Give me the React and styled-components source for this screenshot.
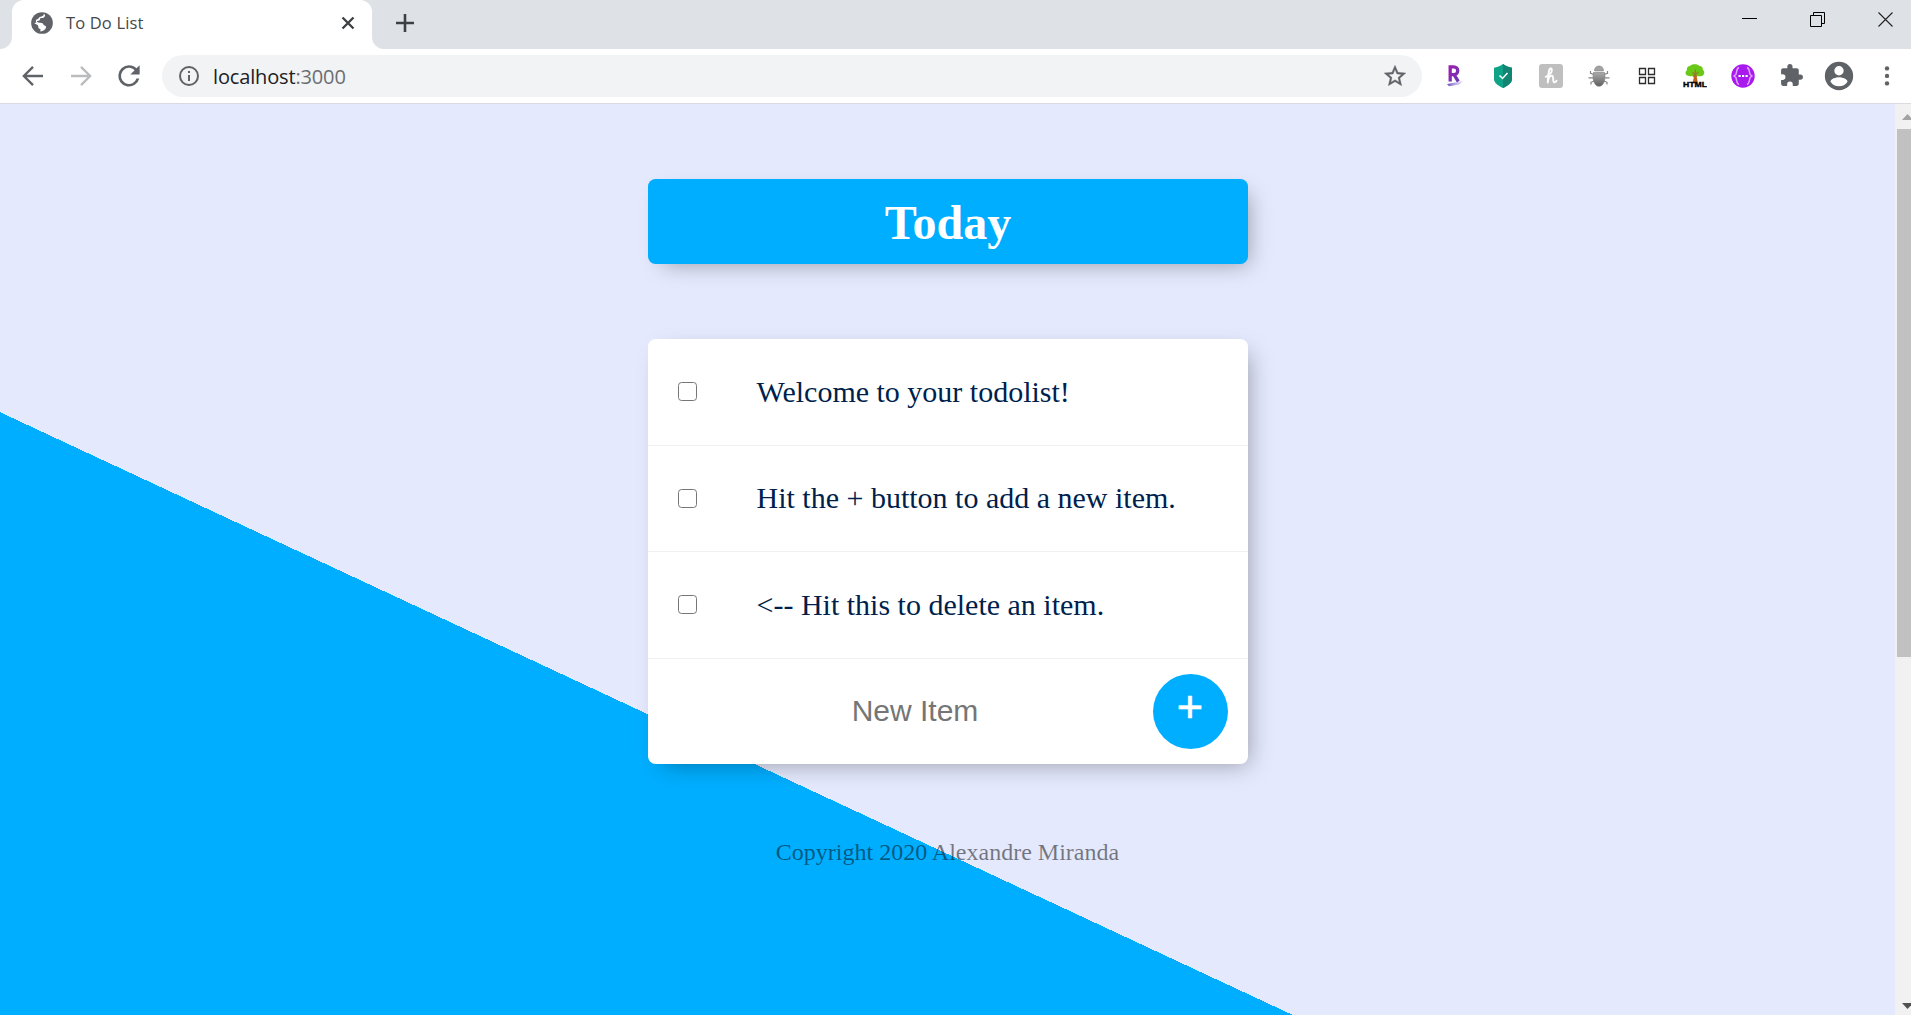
import React from "react";
import styled, { createGlobalStyle } from "styled-components";

const GlobalStyle = createGlobalStyle`
  * { box-sizing: border-box; }
  body { margin: 0; overflow: hidden; }
`;

const UI = `"Open Sans", "Noto Sans", sans-serif`;

const Window = styled.div`
  display: flex;
  flex-direction: column;
  width: 100vw;
  height: 100vh;
  overflow: hidden;
  background: #fff;
`;

const TabStrip = styled.header`
  display: flex;
  height: 49px;
  background: #dee1e6;
`;

const StripEdge = styled.div`
  width: 12px;
  background: #fff;
  &::before {
    content: "";
    display: block;
    height: 49px;
    background: #dee1e6;
    border-bottom-right-radius: 12px;
  }
`;

const Tab = styled.div`
  display: flex;
  align-items: center;
  width: 360px;
  height: 49px;
  padding: 0 17px 3px 17px;
  background: #fff;
  border-radius: 12px 12px 0 0;
`;

const TabTitle = styled.span`
  flex: 1;
  margin-left: 11px;
  font: 400 16.5px/24px ${UI};
  letter-spacing: 0.15px;
  color: #45494d;
`;

const StripRest = styled.div`
  flex: 1;
  background: #fff;
`;

const StripRestInner = styled.div`
  display: flex;
  justify-content: space-between;
  height: 49px;
  padding-left: 24px;
  background: #dee1e6;
  border-bottom-left-radius: 12px;
`;

const NewTab = styled.div`
  display: flex;
  align-items: center;
  height: 46px;
`;

const Controls = styled.div`
  display: flex;
`;

const Control = styled.div`
  display: flex;
  justify-content: center;
  width: ${(p) => p.$width}px;
  padding-top: 12px;
  padding-left: ${(p) => p.$inset || 0}px;
`;

const Toolbar = styled.nav`
  display: flex;
  align-items: center;
  height: 55px;
  padding: 0 0 1px 9px;
  background: #fff;
  border-bottom: 1px solid #d9dbe0;
`;

const Cell = styled.div`
  display: flex;
  align-items: center;
  justify-content: center;
  width: 48px;
  height: 42px;
`;

const AddressBar = styled.div`
  display: flex;
  align-items: center;
  flex: 1;
  height: 42px;
  margin: 1px 9px 0 9px;
  padding: 0 14px 0 15px;
  border-radius: 21px;
  background: #f1f3f4;
`;

const Url = styled.span`
  flex: 1;
  margin-left: 12px;
  padding-top: 1px;
  font: 400 20px/28px ${UI};
  letter-spacing: -0.15px;
  color: #202124;
`;

const Port = styled.span`
  color: #6a6e73;
`;

const Viewport = styled.div`
  display: flex;
  height: 911px;
`;

const Page = styled.main`
  flex: 1;
  background: linear-gradient(25deg, #00aeff 50%, #e4e9fd 50%) 0 0 / 100% 1500px no-repeat;
  font-family: "Liberation Serif", "Times New Roman", serif;
`;

const Box = styled.section`
  width: 600px;
  margin: 75px auto 0;
  border-radius: 7.5px;
  background: ${(p) => p.$color};
  box-shadow: 7.5px 7.5px 22.5px -7.5px rgba(0, 0, 0, 0.35);
`;

const Heading = styled.h1`
  margin: 0;
  padding: 16px 15px 14px 16px;
  font-size: 48px;
  line-height: 55px;
  text-align: center;
  color: #fff;
`;

const Item = styled.div`
  display: flex;
  align-items: center;
  height: 106.6px;
  border-bottom: 1px solid #f1f1f1;
`;

const Check = styled.input`
  appearance: none;
  width: 19px;
  height: 19px;
  margin: 0 30px;
  border: 1px solid #767676;
  border-radius: 3.5px;
  background: #fff;
`;

const ItemText = styled.p`
  margin: 0;
  padding: 30px;
  font-size: 30px;
  line-height: 34px;
  white-space: nowrap;
  color: #001f4d;
`;

const NewItem = styled.form`
  display: flex;
  align-items: center;
  height: 105.4px;
  padding: 0 20px 0 30px;
`;

const TextInput = styled.input`
  flex: 1;
  min-width: 0;
  height: 90px;
  padding: 0;
  border: 0;
  outline: 0;
  background: transparent;
  font: 400 30px "Liberation Sans", Arial, sans-serif;
  text-align: center;
  &::placeholder { color: #757575; opacity: 1; }
`;

const AddButton = styled.button`
  width: 75px;
  height: 75px;
  padding: 0 0 9px;
  border: 0;
  border-radius: 50%;
  background: #00aeff;
  color: #fff;
  font: 400 45px "Liberation Sans", Arial, sans-serif;
  -webkit-text-stroke: 0.7px #fff;
`;

const Footer = styled.footer`
  margin-top: 75px;
  font-size: 24px;
  line-height: 27px;
  text-align: center;
  color: rgba(0, 0, 0, 0.5);
`;

const Scrollbar = styled.aside`
  display: flex;
  flex-direction: column;
  justify-content: space-between;
  width: 16px;
  overflow: hidden;
  background: #f1f1f1;
`;

const ScrollArrow = styled.svg`
  display: block;
  width: 25px;
  height: 25px;
  flex: none;
`;

const Thumb = styled.div`
  height: 528px;
  margin: 0 0 auto 2px;
  background: #c1c1c1;
`;

const MiniLabel = styled.text`
  font: 900 8px "Liberation Sans", Arial, sans-serif;
`;

const Svg = ({ w = 24, h = w, box = "0 0 24 24", children, ...rest }) => (
  <svg width={w} height={h} viewBox={box} fill="none" {...rest}>{children}</svg>
);

const Globe = () => (
  <Svg w={26}>
    <circle cx="12" cy="12" r="10" fill="#5f6368" />
    <path fill="#fff" d="M14.800 4.200c.3 2-1 3.200-2.800 3.100-1.200 0-2 .3-1.900 1.500 0 .9-.9 1.100-1.900 1.100-.9 0-1 .7-.4 1.300.8.7 3.800.1 5 1.200.8.700.6 1.800 1.500 2 1 .2 1.500.7 1.400 1.700-.2 1.700-2.200 3.300-5.300 3.700l.2-2.200c-1.200-.2-2-.9-2-2.200 0-1.200-.5-1.600-1.500-2.100L3.900 11.600c.3-4.200 3.900-7.600 8.100-7.600 1 0 1.900 0 2.800.2z" />
    <path fill="#5f6368" d="M3.500 8.500C5 5 8 3 12 3l1.500.9C13.500 5.600 12 6 10.500 6.200 9 6.400 9 8.400 7.500 8.600c-1.500.2-1.500 2-.5 2.800L4 12.500z" />
  </Svg>
);

const Arrow = ({ color, flip }) => (
  <Svg w={30} stroke={color} strokeWidth="1.9" transform={flip ? "scale(-1 1)" : undefined}>
    <path d="M20 12H5M12 4.700 4.700 12l7.300 7.300" />
  </Svg>
);

const Reload = () => (
  <Svg w={32}>
    <path fill="#5f6368" d="M17.650 6.350A7.960 7.960 0 0 0 12 4a8 8 0 1 0 7.730 10h-2.080A6 6 0 1 1 12 6c1.660 0 3.140.69 4.220 1.780L13 11h7V4l-2.350 2.350z" transform="translate(0 -.1)" />
  </Svg>
);

const Info = () => (
  <Svg w={24}>
    <path fill="#5f6368" d="M11 7h2v2h-2zm0 4h2v6h-2zm1-9a10 10 0 1 0 0 20 10 10 0 0 0 0-20zm0 18a8 8 0 1 1 0-16 8 8 0 0 1 0 16z" />
  </Svg>
);

const Star = () => (
  <Svg w={26}>
    <path fill="#5f6368" stroke="#5f6368" strokeWidth=".3" d="m22 9.240-7.190-.62L12 2 9.190 8.630 2 9.240l5.460 4.730L5.820 21 12 17.270 18.180 21l-1.630-7.030L22 9.240zM12 15.400l-3.760 2.270 1-4.280-3.320-2.880 4.380-.38L12 6.100l1.710 4.040 4.380.38-3.320 2.880 1 4.280L12 15.400z" />
  </Svg>
);

const Rakuten = () => (
  <Svg>
    <defs>
      <linearGradient id="r" x1="0" x2="1" y1="0" y2="1"><stop stopColor="#9c1fae" /><stop offset="1" stopColor="#6a39b8" /></linearGradient>
      <linearGradient id="u"><stop stopColor="#6a49c0" /><stop offset="1" stopColor="#b9a9e8" stopOpacity=".3" /></linearGradient>
    </defs>
    <path stroke="url(#r)" strokeWidth="3.300" d="M7.200 17.500V2.800h3.600a3.600 3.600 0 0 1 0 7.900H7.200M11 10.700l4.300 6.800" />
    <path fill="url(#u)" d="M4 20 20.500 17l-4 3.500L6 22.200z" />
  </Svg>
);

const Shield = () => (
  <Svg>
    <path fill="#0ea387" d="M12 0c3 2.300 6 3.300 9 3.700V15c0 4-4.500 7-9 9-4.500-2-9-5-9-9V3.700C6 3.300 9 2.300 12 0z" />
    <path fill="#118472" d="M12 0c3 2.300 6 3.300 9 3.700V15c0 4-4.500 7-9 9z" />
    <path stroke="#fff" strokeWidth="1.500" d="m8.500 11.500 3 3L16.500 9" />
  </Svg>
);

const Honey = () => (
  <Svg>
    <rect width="24" height="24" rx="3" fill="#bfbfbf" />
    <path stroke="#fff" strokeWidth="1.900" strokeLinecap="round" strokeLinejoin="round" d="M6.800 12.800c3.200-1.600 6.300-4.600 6-7.200-.3-2-2.200-1.400-2.800 1.200-.8 3.600-1.100 7.500-1.200 11.700.4-3.800 2-6.900 4-6.900 2.600 0 .2 6.800 2.600 6.800 1 0 1.600-.7 2.100-1.700" />
  </Svg>
);

const Bug = () => (
  <Svg>
    <defs><linearGradient id="b" x2="0" y2="1"><stop stopColor="#aaa" /><stop offset="1" stopColor="#606060" /></linearGradient></defs>
    <path stroke="#858585" strokeWidth="1.200" d="M7 10.500 3.500 9.300V7M17 10.500l3.500-1.200V7M6 13.800H1.500M18 13.800h4.500M7 17l-3 1.300v2.200M17 17l3 1.300v2.200" />
    <path fill="#a3a3a3" stroke="#858585" strokeWidth=".6" d="M7.500 7C7.500 3.500 9.500 2 12 2s4.500 1.500 4.500 5z" />
    <path fill="url(#b)" stroke="#777" strokeWidth=".6" d="M6.500 8.500h11c1.500 7-1 13.800-5.500 13.800S5 15.500 6.500 8.500z" />
  </Svg>
);

const Squares = () => (
  <Svg w={18} box="0 0 18 18" stroke="#2c2c2c" strokeWidth="1.300">
    <path d="M1.500 1.500h6v6h-6zM10.500 1.500h6v6h-6zM1.500 10.500h6v6h-6zM10.500 10.500h6v6h-6z" />
  </Svg>
);

const HtmlTree = () => (
  <Svg>
    <path stroke="#b0691f" strokeWidth="2" d="M12.200 7v12M12 13 8 9.500M12.500 12.500l4-3.500" />
    <path fill="#68c916" d="M7 2C8.500-.3 14.500-.5 16.500 2c2.500.3 3.700 2 3.200 3.800 2.800 1.700 1.600 6.200-1.700 6.400-2.200.3-4.300-.5-5.700-1.500-1.500 1.200-4.300 1.900-6.300 1.200C2.500 12 1.300 8 4 6.200 3.300 4 4.700 2.200 7 2z" />
    <path stroke="#a4752a" strokeWidth="1.300" d="M12.300 5.500V14M12.200 11 9.500 8.500M12.400 10.500l3-2.500" />
    <path fill="#c0641a" d="M11 12.500h2.600l1.400 7H9.500z" />
    <MiniLabel x="0" y="23.300" fill="#000" stroke="#000" strokeWidth=".4" textLength="24" lengthAdjust="spacingAndGlyphs">HTML</MiniLabel>
  </Svg>
);

const PurpleBadge = () => (
  <Svg>
    <circle cx="12" cy="12" r="11.700" fill="#a819ee" />
    <path stroke="#dfa0ff" strokeWidth="1.500" d="M8 3.500C5 4.500 6 8.500 4.800 10.500L3 12l1.800 1.500C6 15.500 5 19.500 8 20.500M16 3.500c3 1 2 5 3.200 7L21 12l-1.800 1.500c-1.200 2-.2 6-3.200 7" />
    <path stroke="#fff" strokeWidth="2" strokeDasharray="2.200 1.300" d="M7.500 12h9.500" />
  </Svg>
);

const Puzzle = () => (
  <Svg w={25}>
    <path fill="#5f6368" d="M20.500 11H19V7a2 2 0 0 0-2-2h-4V3.500a2.500 2.500 0 0 0-5 0V5H4a2 2 0 0 0-2 2v3.800h1.500a2.700 2.700 0 0 1 0 5.400H2V20c0 1.100.9 2 2 2h3.800v-1.500a2.700 2.700 0 0 1 5.400 0V22H17a2 2 0 0 0 2-2v-4h1.500a2.500 2.500 0 0 0 0-5z" />
  </Svg>
);

const Avatar = () => (
  <Svg w={34}>
    <path fill="#5f6368" d="M12 2a10 10 0 1 0 0 20 10 10 0 0 0 0-20zm0 3a3.300 3.300 0 1 1 0 6.600A3.300 3.300 0 0 1 12 5zm0 14.200a7.200 7.200 0 0 1-6-3.220c.03-1.990 4-3.080 6-3.080s5.970 1.090 6 3.080a7.200 7.200 0 0 1-6 3.220z" />
  </Svg>
);

const Dots = () => (
  <Svg>
    <g fill="#5f6368"><circle cx="12" cy="4.400" r="2.200" /><circle cx="12" cy="11.900" r="2.200" /><circle cx="12" cy="19.400" r="2.200" /></g>
  </Svg>
);

const EXTENSIONS = [Rakuten, Shield, Honey, Bug, Squares, HtmlTree, PurpleBadge, Puzzle, Avatar, Dots];

const ITEMS = [
  "Welcome to your todolist!",
  "Hit the + button to add a new item.",
  "<-- Hit this to delete an item.",
];

export default function App() {
  return (
    <Window>
      <GlobalStyle />
      <TabStrip>
        <StripEdge />
        <Tab>
          <Globe />
          <TabTitle>To Do List</TabTitle>
          <Svg w={14} box="0 0 14 14" stroke="#3c4043" strokeWidth="2.300"><path d="m1.500 1.500 11 11m0-11-11 11" /></Svg>
        </Tab>
        <StripRest>
          <StripRestInner>
            <NewTab>
              <Svg w={18} box="0 0 18 18" stroke="#3c4043" strokeWidth="2.600"><path d="M9 0v18M0 9h18" /></Svg>
            </NewTab>
            <Controls>
              <Control $width={68}><Svg w={15} box="0 0 15 15" stroke="#000"><path d="M0 6.500h15" /></Svg></Control>
              <Control $width={68}><Svg w={15} box="0 0 15 15" stroke="#000"><path d="M.5 3.500h11v11H.5zM3.500 3.500v-3h11v11h-3" /></Svg></Control>
              <Control $width={60} $inset={9}><Svg w={15} box="0 0 15 15" stroke="#222" strokeWidth="1.100"><path d="m.5.5 14 14m0-14-14 14" /></Svg></Control>
            </Controls>
          </StripRestInner>
        </StripRest>
      </TabStrip>
      <Toolbar>
        <Cell><Arrow color="#5f6368" /></Cell>
        <Cell><Arrow color="#babcbe" flip /></Cell>
        <Cell><Reload /></Cell>
        <AddressBar>
          <Info />
          <Url>localhost<Port>:3000</Port></Url>
          <Star />
        </AddressBar>
        {EXTENSIONS.map((Icon, i) => <Cell key={i}><Icon /></Cell>)}
      </Toolbar>
      <Viewport>
        <Page>
          <Box $color="#00aeff"><Heading>Today</Heading></Box>
          <Box $color="#fff">
            {ITEMS.map((text) => (
              <Item key={text}>
                <Check type="checkbox" />
                <ItemText>{text}</ItemText>
              </Item>
            ))}
            <NewItem>
              <TextInput type="text" placeholder="New Item" />
              <AddButton type="button">+</AddButton>
            </NewItem>
          </Box>
          <Footer>Copyright 2020 Alexandre Miranda</Footer>
        </Page>
        <Scrollbar>
          <ScrollArrow viewBox="0 0 25 25"><path fill="#a3a3a3" d="M7 16h11l-5.500-6z" /></ScrollArrow>
          <Thumb />
          <ScrollArrow viewBox="0 0 25 25"><path fill="#505050" d="M7 13h11l-5.500 6z" /></ScrollArrow>
        </Scrollbar>
      </Viewport>
    </Window>
  );
}
